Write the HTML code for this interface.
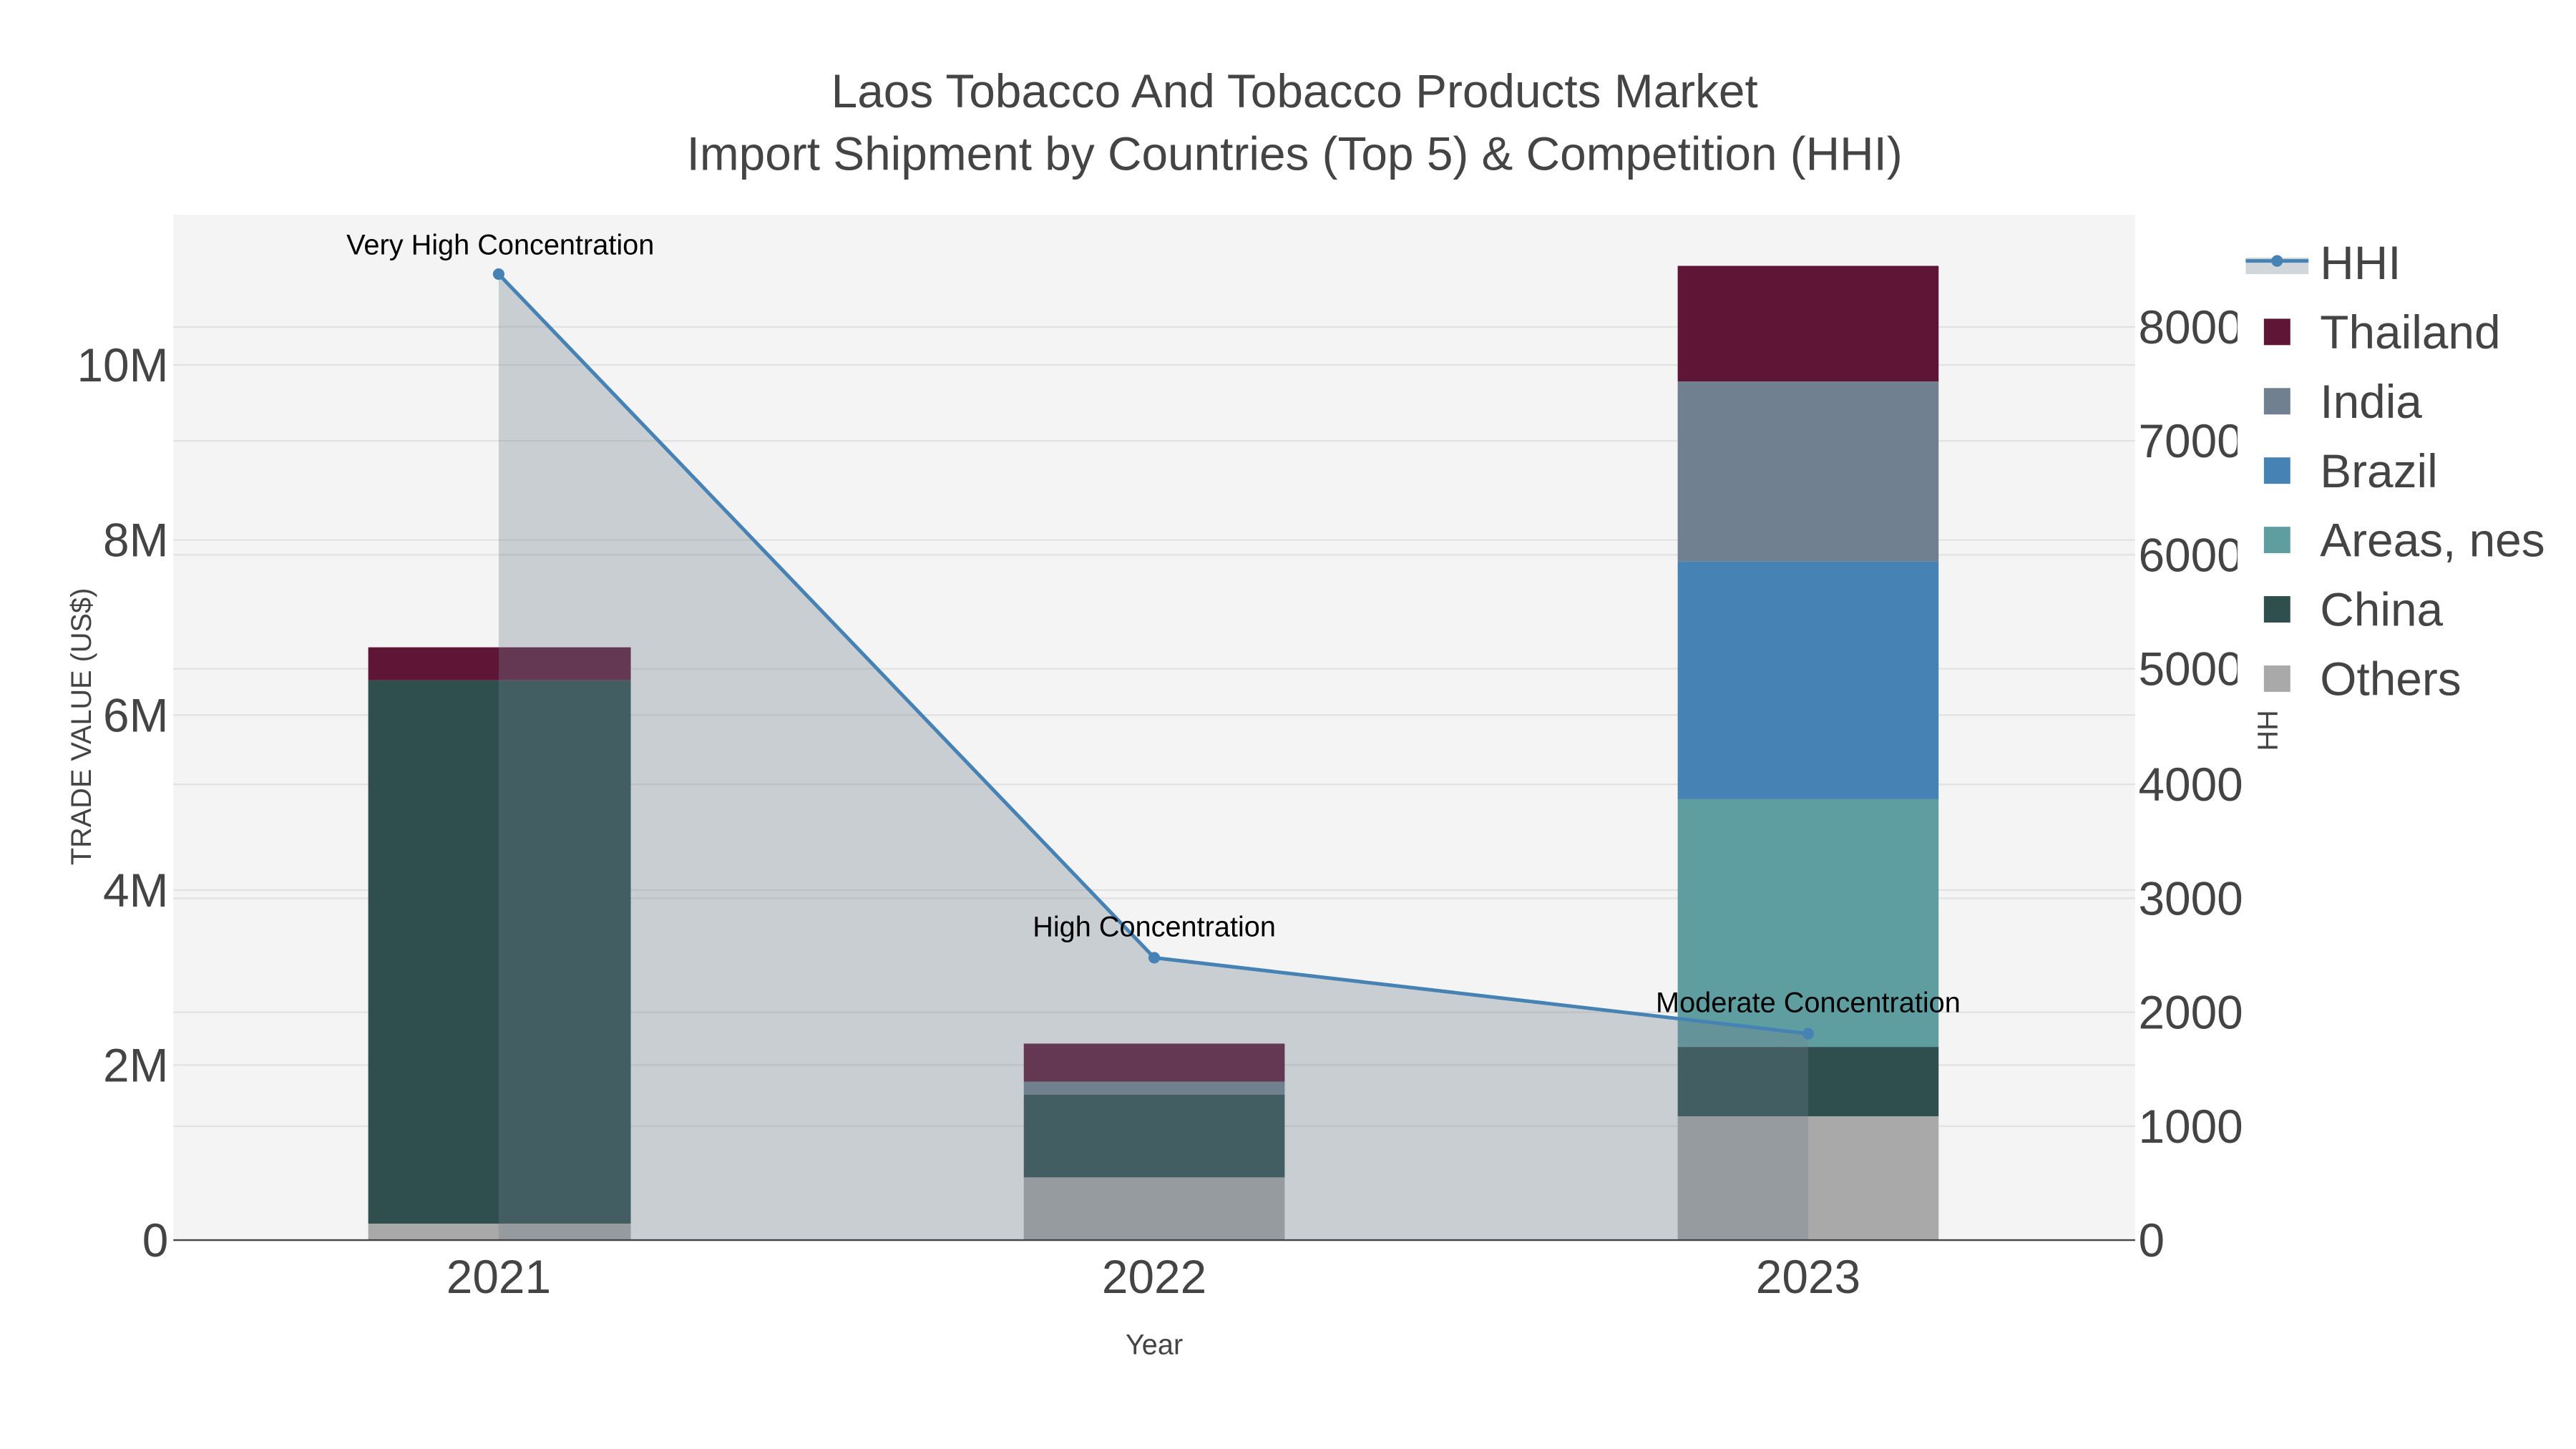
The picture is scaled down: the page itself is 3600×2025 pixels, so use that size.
<!DOCTYPE html>
<html><head><meta charset="utf-8"><style>html,body{margin:0;padding:0;background:#fff}svg{display:block}text{font-family:"Liberation Sans",sans-serif}</style></head><body>
<svg width="3600" height="2025" viewBox="0 0 1560 877.5" xmlns="http://www.w3.org/2000/svg">
<rect width="1560" height="877.5" fill="#fff"/>
<rect x="105" y="130" width="1188" height="621" fill="#f4f4f4"/>
<g stroke="#e2e2e2" stroke-width="1">
<line x1="105" x2="1293" y1="645" y2="645"/><line x1="105" x2="1293" y1="539" y2="539"/><line x1="105" x2="1293" y1="433" y2="433"/><line x1="105" x2="1293" y1="327" y2="327"/><line x1="105" x2="1293" y1="221" y2="221"/>
<line x1="105" x2="1293" y1="682" y2="682"/><line x1="105" x2="1293" y1="613" y2="613"/><line x1="105" x2="1293" y1="544" y2="544"/><line x1="105" x2="1293" y1="475" y2="475"/><line x1="105" x2="1293" y1="405" y2="405"/><line x1="105" x2="1293" y1="336" y2="336"/><line x1="105" x2="1293" y1="267" y2="267"/><line x1="105" x2="1293" y1="198" y2="198"/>
</g>
<rect x="223" y="741" width="159" height="10" fill="#a9a9a9"/>
<rect x="223" y="412" width="159" height="329" fill="#2f4f4f"/>
<rect x="223" y="392" width="159" height="20" fill="#5f1535"/>
<rect x="620" y="713" width="158" height="38" fill="#a9a9a9"/>
<rect x="620" y="663" width="158" height="50" fill="#2f4f4f"/>
<rect x="620" y="655" width="158" height="8" fill="#708090"/>
<rect x="620" y="632" width="158" height="23" fill="#5f1535"/>
<rect x="1016" y="676" width="158" height="75" fill="#a9a9a9"/>
<rect x="1016" y="634" width="158" height="42" fill="#2f4f4f"/>
<rect x="1016" y="484" width="158" height="150" fill="#5f9ea0"/>
<rect x="1016" y="340" width="158" height="144" fill="#4682b4"/>
<rect x="1016" y="231" width="158" height="109" fill="#708090"/>
<rect x="1016" y="161" width="158" height="70" fill="#5f1535"/>
<path d="M302 166 L699 580 L1095 626 L1095 751 L302 751 Z" fill="rgba(112,128,144,0.32)"/>
<line x1="105" x2="1293" y1="751" y2="751" stroke="#444" stroke-width="1"/>
<polyline points="302,166 699,580 1095,626" fill="none" stroke="#4682b4" stroke-width="2.2"/>
<circle cx="302" cy="166" r="3.5" fill="#4682b4"/><circle cx="699" cy="580" r="3.5" fill="#4682b4"/><circle cx="1095" cy="626" r="3.5" fill="#4682b4"/>
<g font-size="17.2" fill="#000" text-anchor="middle">
<text x="303" y="154">Very High Concentration</text>
<text x="699" y="567">High Concentration</text>
<text x="1095" y="613">Moderate Concentration</text>
</g>
<g font-size="28.5" fill="#444" text-anchor="middle">
<text x="784" y="65">Laos Tobacco And Tobacco Products Market</text>
<text x="784" y="103">Import Shipment by Countries (Top 5) &amp; Competition (HHI)</text>
</g>
<g font-size="28.5" fill="#444" text-anchor="end">
<text x="102" y="761">0</text><text x="102" y="655">2M</text><text x="102" y="549">4M</text><text x="102" y="443">6M</text><text x="102" y="337">8M</text><text x="102" y="231">10M</text>
</g>
<g font-size="28.5" fill="#444" text-anchor="start">
<text x="1295" y="761">0</text><text x="1295" y="692">1000</text><text x="1295" y="623">2000</text><text x="1295" y="554">3000</text><text x="1295" y="485">4000</text><text x="1295" y="415">5000</text><text x="1295" y="346">6000</text><text x="1295" y="277">7000</text><text x="1295" y="208">8000</text>
</g>
<g font-size="28.5" fill="#444" text-anchor="middle">
<text x="302" y="783">2021</text><text x="699" y="783">2022</text><text x="1095" y="783">2023</text>
</g>
<text x="699" y="820" font-size="17.2" fill="#444" text-anchor="middle">Year</text>
<text transform="translate(55,440) rotate(-90)" font-size="17.2" fill="#444" text-anchor="middle">TRADE VALUE (US$)</text>
<text transform="translate(1379,440) rotate(-90)" font-size="17.2" fill="#444" text-anchor="middle">HHI</text>
<rect x="1355" y="140" width="205" height="290" fill="#fff"/>
<rect x="1360" y="156" width="38" height="10" fill="rgba(112,128,144,0.32)"/>
<line x1="1360" x2="1398" y1="158" y2="158" stroke="#4682b4" stroke-width="2.2"/><circle cx="1379" cy="158" r="3.5" fill="#4682b4"/>
<rect x="1371" y="193" width="16" height="16" fill="#5f1535"/>
<rect x="1371" y="235" width="16" height="16" fill="#708090"/>
<rect x="1371" y="277" width="16" height="16" fill="#4682b4"/>
<rect x="1371" y="319" width="16" height="16" fill="#5f9ea0"/>
<rect x="1371" y="361" width="16" height="16" fill="#2f4f4f"/>
<rect x="1371" y="403" width="16" height="16" fill="#a9a9a9"/>
<g font-size="28.5" fill="#444">
<text x="1405" y="169">HHI</text><text x="1405" y="211">Thailand</text><text x="1405" y="253">India</text><text x="1405" y="295">Brazil</text><text x="1405" y="337">Areas, nes</text><text x="1405" y="379">China</text><text x="1405" y="421">Others</text>
</g>
</svg>
</body></html>
